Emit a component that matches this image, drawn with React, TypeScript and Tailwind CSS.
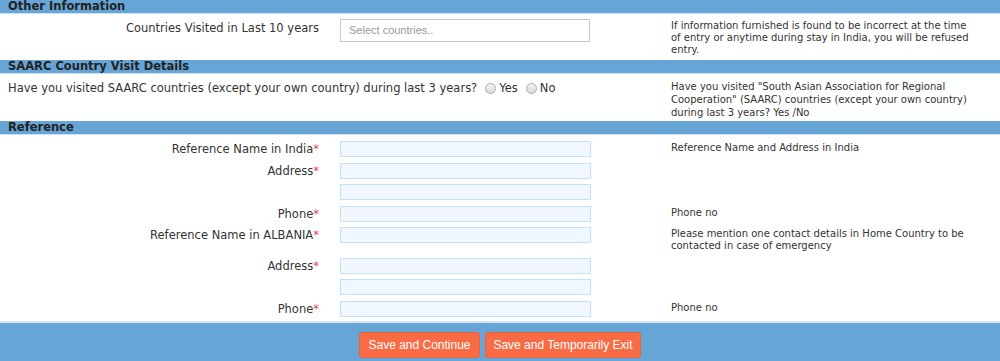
import type { ReactNode } from 'react'

const font = { fontFamily: '"DejaVu Sans", Verdana, sans-serif' }

function SectionHeader({ title }: { title: string }) {
  return (
    <div className="h-[14px] bg-[#67a5d7] border-b border-[#cfe2f3] pl-[8px] text-[11.5px] leading-[13px] font-bold text-[#222]">
      {title}
    </div>
  )
}

function Req({ children }: { children: ReactNode }) {
  return (
    <>
      {children}
      <span className="text-[#e0474c]">*</span>
    </>
  )
}

function RefInput() {
  return <div className="h-[16px] w-[251px] border border-[#c2e1fa] bg-[#f0f7fe]" />
}

function RefRow({ label, help }: { label?: ReactNode; help?: ReactNode }) {
  return (
    <div className="grid grid-cols-[332px_339px_1fr] items-start">
      <div className="pr-[13px] text-right text-[11.5px] leading-[16px] text-[#333]">{label}</div>
      <div className="pl-[8px]">
        <RefInput />
      </div>
      <div className="w-[302px] text-[10px] leading-[12px] text-[#333] pt-[1px]">{help}</div>
    </div>
  )
}

function Radio({ label }: { label: string }) {
  return (
    <span className="inline-flex items-center gap-[3px] ml-[8px]">
      <span className="inline-block w-[11px] h-[11px] rounded-full border border-[#aaa] bg-gradient-to-b from-[#f4f4f4] to-[#dadada]" />
      {label}
    </span>
  )
}

export default function App() {
  return (
    <div className="w-[1000px] h-[361px] overflow-hidden bg-white" style={font}>
      <SectionHeader title="Other Information" />
      <div className="grid grid-cols-[332px_339px_1fr] h-[46px] pt-[5px]">
        <div className="pr-[13px] text-right text-[11.5px] leading-[16px] text-[#333] pt-[1px]">
          Countries Visited in Last 10 years
        </div>
        <div className="pl-[8px]">
          <div
            className="h-[23px] w-[250px] border border-[#c8c8c8] bg-white pl-[8px] text-[11px] leading-[21px] text-[#999]"
            style={{ fontFamily: '"Liberation Sans", Arial, sans-serif' }}
          >
            Select countries..
          </div>
        </div>
        <div className="w-[302px] text-[10px] leading-[12px] text-[#333] pt-[1px]">
          If information furnished is found to be incorrect at the time of entry or anytime during stay in India, you
          will be refused entry.
        </div>
      </div>

      <SectionHeader title="SAARC Country Visit Details" />
      <div className="grid grid-cols-[671px_1fr] h-[47px] pt-[6px]">
        <div className="pl-[8px] text-[11.5px] leading-[16px] text-[#333] flex items-center self-start">
          Have you visited SAARC countries (except your own country) during last 3 years?
          <Radio label="Yes" />
          <Radio label="No" />
        </div>
        <div className="w-[302px] text-[10px] leading-[13px] text-[#333]">
          Have you visited "South Asian Association for Regional Cooperation" (SAARC) countries (except your own
          country) during last 3 years? Yes /No
        </div>
      </div>

      <SectionHeader title="Reference" />
      <div className="flex flex-col gap-[5.5px] pt-[6px] pb-[4px]">
        <RefRow label={<Req>Reference Name in India</Req>} help="Reference Name and Address in India" />
        <RefRow label={<Req>Address</Req>} />
        <RefRow />
        <RefRow label={<Req>Phone</Req>} help="Phone no" />
        <RefRow
          label={<Req>Reference Name in ALBANIA</Req>}
          help="Please mention one contact details in Home Country to be contacted in case of emergency"
        />
        <RefRow label={<Req>Address</Req>} />
        <RefRow />
        <RefRow label={<Req>Phone</Req>} help="Phone no" />
      </div>

      <div
        className="border-t-2 border-[#d6e6f4] bg-[#67a5d7] flex justify-center gap-[5px] pt-[9px] pb-[6px]"
        style={{ fontFamily: '"Liberation Sans", Arial, sans-serif' }}
      >
        <button className="h-[26px] w-[121px] rounded-[3px] border border-[#e8623c] bg-[#f96b45] text-[12px] text-white">
          Save and Continue
        </button>
        <button className="h-[26px] w-[156px] rounded-[3px] border border-[#e8623c] bg-[#f96b45] text-[12px] text-white">
          Save and Temporarily Exit
        </button>
      </div>
    </div>
  )
}
